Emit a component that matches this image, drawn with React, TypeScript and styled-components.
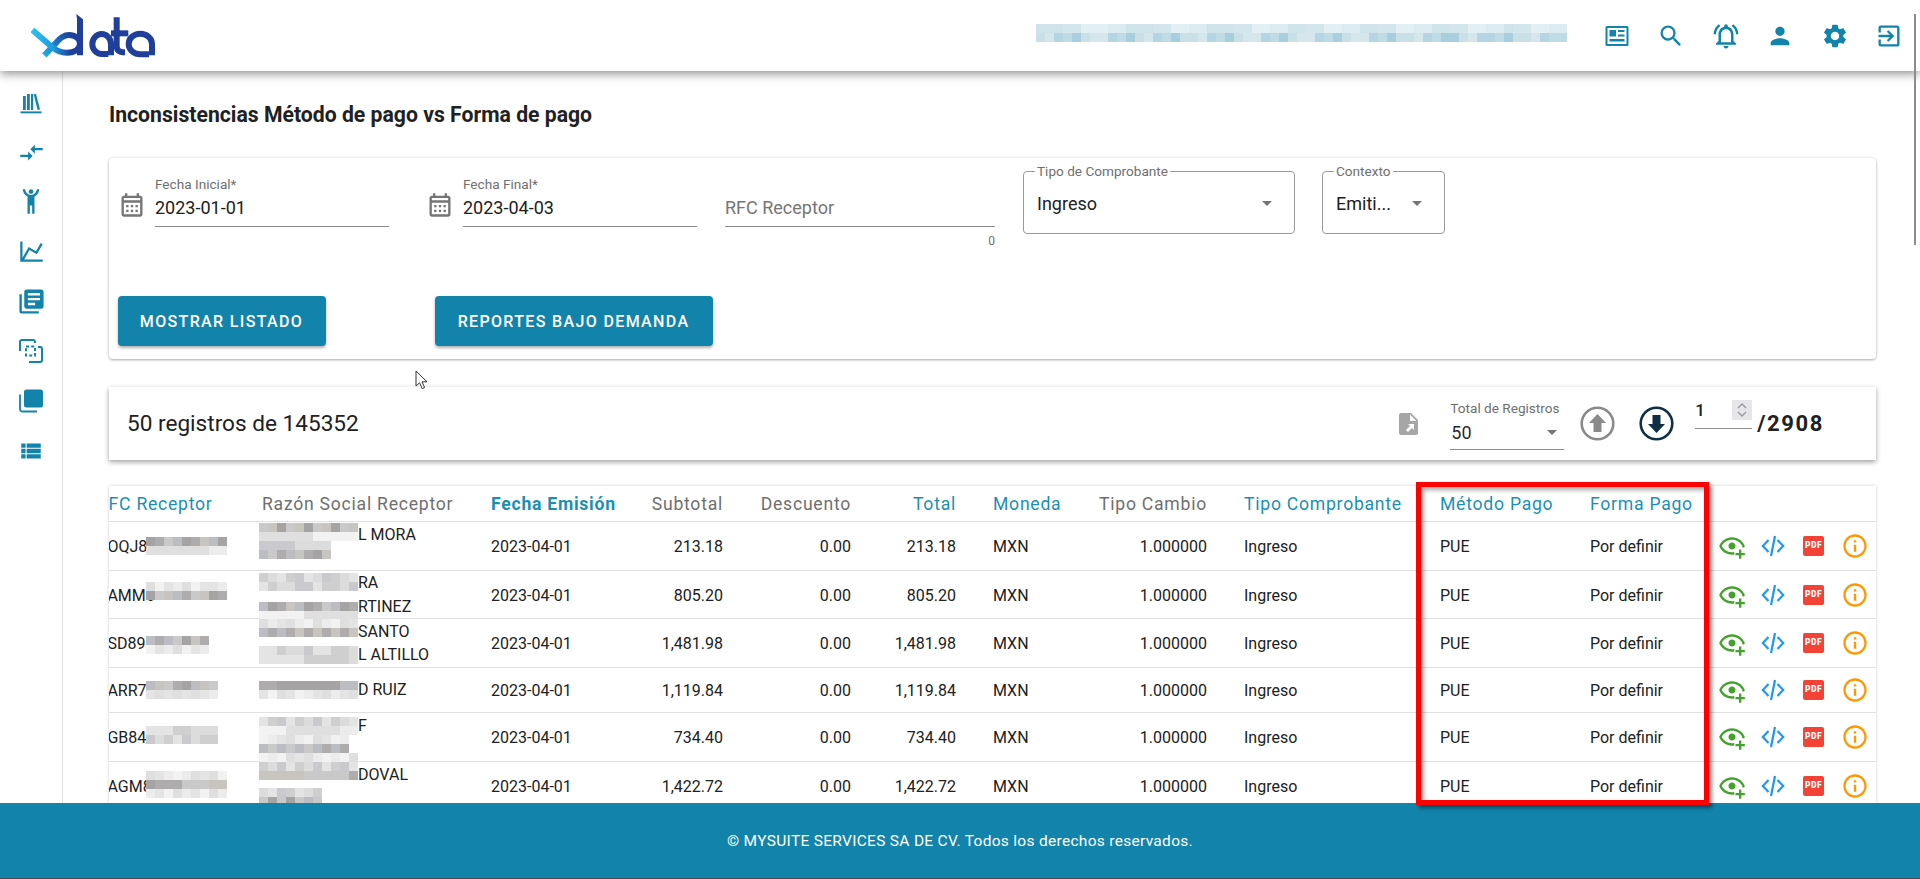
import React from "react";
import styled, { createGlobalStyle } from "styled-components";
import {
  MdCompareArrows,
  MdExitToApp,
  MdInfoOutline,
  MdLibraryBooks,
  MdOutlineCalendarMonth,
  MdOutlineNotificationsActive,
  MdPerson,
  MdSearch,
  MdSettings,
  MdViewList,
} from "react-icons/md";

const BRAND = "#1283aa";
const LINK = "#1a8fb5";
const MUTED = "#6f6f6f";

const GlobalStyle = createGlobalStyle`
  html, body {
    margin: 0;
    padding: 0;
    background: #fff;
  }
  body {
    font-family: Roboto, "Liberation Sans", sans-serif;
    color: rgba(0, 0, 0, 0.87);
  }
  * {
    box-sizing: border-box;
  }
`;

const Page = styled.div`
  position: relative;
  display: flex;
  flex-direction: column;
  height: 100vh;
  overflow: hidden;
`;

const Header = styled.header`
  position: relative;
  z-index: 2;
  flex: 0 0 71px;
  display: flex;
  align-items: center;
  padding: 0 17px 0 31px;
  background: #fff;
  box-shadow: 0 3px 9px rgba(0, 0, 0, 0.42);
`;

const HeaderIcons = styled.div`
  display: flex;
  align-items: center;
  gap: 26.4px;
  margin-left: 36px;
  color: ${BRAND};
`;

const HeaderBlur = styled.div`
  display: flex;
  margin-left: auto;
  margin-top: -6px;
`;

const BellIcon = styled(MdOutlineNotificationsActive)`
  margin: 0 -1px;
`;

const Body = styled.div`
  flex: 1;
  min-height: 0;
  display: flex;
`;

const Sidebar = styled.nav`
  flex: 0 0 63px;
  display: flex;
  flex-direction: column;
  align-items: center;
  padding: 7px 0 0 0;
  border-right: 1px solid #e0e0e0;
  color: ${BRAND};
`;

const SideSlot = styled.div`
  flex: 0 0 49.7px;
  display: flex;
  align-items: center;
  justify-content: center;
  width: 100%;
`;

const Main = styled.main`
  flex: 1;
  min-width: 0;
  padding: 31px 44px 0 46px;
  overflow: hidden;
`;

const Title = styled.h1`
  margin: 0 0 30px;
  font-size: 21.2px;
  line-height: 26px;
  font-weight: 700;
  color: #212121;
`;

const FilterCard = styled.section`
  height: 201px;
  padding: 13px 0 13px 8.5px;
  border-radius: 4px;
  background: #fff;
  box-shadow: 0 1px 3px rgba(0, 0, 0, 0.32), 0 0 2px rgba(0, 0, 0, 0.08);
`;

const FieldRow = styled.div`
  display: flex;
  align-items: flex-start;
  height: 77px;
`;

const DateField = styled.div<{ $gap: number }>`
  display: flex;
  align-items: flex-start;
  margin-left: ${(p) => p.$gap}px;
  color: #757575;

  & > svg {
    margin-top: 20px;
    margin-right: 9.5px;
  }
`;

const TextField = styled.div<{ $width: number; $gap?: number }>`
  width: ${(p) => p.$width}px;
  margin-left: ${(p) => p.$gap ?? 0}px;
  padding-top: 6px;
`;

const FieldLabel = styled.div`
  height: 14px;
  margin-bottom: 4px;
  font-size: 13.6px;
  line-height: 14px;
  color: ${MUTED};
`;

const FieldValue = styled.div<{ $placeholder?: boolean }>`
  height: 32px;
  padding-bottom: 7px;
  font-size: 18px;
  line-height: 25px;
  color: ${(p) => (p.$placeholder ? "#767676" : "#212121")};
  border-bottom: 1px solid #8c8c8c;
`;

const FieldCount = styled.div`
  margin-top: 7px;
  font-size: 12px;
  line-height: 14px;
  text-align: right;
  color: ${MUTED};
`;

const OutlinedSelect = styled.div<{ $width: number; $gap: number }>`
  position: relative;
  display: flex;
  align-items: center;
  justify-content: space-between;
  flex: 0 0 ${(p) => p.$width}px;
  height: 63px;
  margin-left: ${(p) => p.$gap}px;
  padding: 1px 22px 0 13px;
  border: 1px solid #9a9a9a;
  border-radius: 4px;
  font-size: 18px;
  color: #212121;
`;

const SelectLegend = styled.span`
  position: absolute;
  top: -8px;
  left: 11px;
  padding: 0 2px;
  background: #fff;
  font-size: 13.6px;
  line-height: 14px;
  color: ${MUTED};
`;

const Caret = styled.span`
  width: 0;
  height: 0;
  border-left: 5.5px solid transparent;
  border-right: 5.5px solid transparent;
  border-top: 5.5px solid #757575;
`;

const ButtonRow = styled.div`
  display: flex;
  gap: 109px;
  margin-top: 48px;
`;

const ActionButton = styled.button<{ $width: number }>`
  width: ${(p) => p.$width}px;
  height: 50px;
  border: 0;
  border-radius: 4px;
  background: ${BRAND};
  color: #fff;
  font-family: inherit;
  font-size: 16px;
  font-weight: 500;
  letter-spacing: 1.35px;
  text-transform: uppercase;
  box-shadow: 0 2px 3px rgba(0, 0, 0, 0.3);
`;

const Toolbar = styled.section`
  display: flex;
  align-items: center;
  height: 73px;
  margin-top: 28px;
  padding: 0 0 0 18px;
  background: #fff;
  box-shadow: 0 2px 5px rgba(0, 0, 0, 0.38);
`;

const RecordCount = styled.div`
  margin-right: auto;
  font-size: 22.6px;
  line-height: 28px;
  color: #212121;
`;

const ExportIcon = styled.svg`
  flex: none;
  margin-right: 32px;
`;

const PageSizeSelect = styled.div`
  align-self: flex-start;
  width: 114px;
  margin-top: 14px;
  margin-right: 16px;
`;

const PageSizeLabel = styled.div`
  font-size: 13.6px;
  line-height: 14px;
  color: ${MUTED};
`;

const PageSizeValue = styled.div`
  display: flex;
  align-items: center;
  justify-content: space-between;
  height: 32px;
  padding: 0 7px 3px 1px;
  border-bottom: 1px solid #8c8c8c;
  font-size: 18px;
  margin-top: 3px;
`;

const RoundIcon = styled.svg<{ $after: number }>`
  flex: none;
  margin-right: ${(p) => p.$after}px;
`;

const PageInput = styled.div`
  position: relative;
  align-self: flex-start;
  width: 57px;
  height: 29px;
  margin-top: 13px;
  border-bottom: 1px solid #8c8c8c;
  font-size: 17px;
  line-height: 20px;
  font-weight: 500;
  color: #212121;
`;

const Spinner = styled.span`
  position: absolute;
  top: 0;
  right: 0;
  display: flex;
  align-items: center;
  justify-content: center;
  width: 20px;
  height: 20px;
  background: #e6e6ea;
`;

const PageTotal = styled.div`
  margin-left: 5px;
  margin-right: 52px;
  font-size: 22px;
  font-weight: 700;
  letter-spacing: 1.6px;
  color: #212121;
`;

const TableCard = styled.section`
  margin-top: 26px;
  background: #fff;
  box-shadow: 0 0 3px rgba(0, 0, 0, 0.2);
  overflow: hidden;
`;

const DataTable = styled.table`
  width: 1795px;
  margin-left: -28px;
  table-layout: fixed;
  border-collapse: separate;
  border-spacing: 0;
`;

const HeadCell = styled.th<{ $right?: boolean; $tone?: "link" | "muted" | "active" }>`
  height: 36px;
  padding: ${(p) => (p.$right ? "1px 21px 0 16px" : "1px 16px 0")};
  text-align: ${(p) => (p.$right ? "right" : "left")};
  border-bottom: 1px solid #e0e0e0;
  font-size: 17.6px;
  letter-spacing: 0.75px;
  white-space: nowrap;
  font-weight: ${(p) => (p.$tone === "active" ? 700 : 400)};
  color: ${(p) => (p.$tone === "muted" ? MUTED : LINK)};
`;

const Cell = styled.td<{ $right?: boolean; $height?: number; $flush?: boolean }>`
  position: relative;
  height: ${(p) => p.$height ?? 49}px;
  padding: ${(p) => (p.$flush ? "0" : "2px")} ${(p) => (p.$right ? "21px" : "16px")} 0 16px;
  text-align: ${(p) => (p.$right ? "right" : "left")};
  border-bottom: 1px solid #e0e0e0;
  font-size: 16px;
  line-height: 23.5px;
  white-space: nowrap;
  color: #212121;
`;

const NameText = styled.div`
  padding-left: 96px;
`;

const ActionIcons = styled.div`
  display: flex;
  align-items: center;
  margin-left: -14px;
  margin-top: -2px;
`;

const ActionSlot = styled.span`
  flex: 0 0 41px;
  display: flex;
  align-items: center;
  justify-content: center;
`;

const PdfBadge = styled.span`
  display: flex;
  align-items: center;
  justify-content: center;
  width: 21px;
  height: 20px;
  border-radius: 2px;
  background: #f44336;
  color: #fff;
  font-size: 8.5px;
  font-weight: 900;
  letter-spacing: 0.4px;
`;

const BlurLayer = styled.svg<{ $left: number; $top: number }>`
  position: absolute;
  left: ${(p) => p.$left}px;
  top: ${(p) => p.$top}px;
`;

const Footer = styled.footer`
  position: relative;
  z-index: 1;
  flex: 0 0 76px;
  display: flex;
  align-items: center;
  justify-content: center;
  background: ${BRAND};
  border-bottom: 1px solid #4a4a4a;
  color: #fff;
  font-size: 15.5px;
  letter-spacing: 0.3px;
`;

const Highlight = styled.div`
  position: absolute;
  z-index: 3;
  left: 1416px;
  top: 482px;
  width: 293px;
  height: 323px;
  border: 5px solid #ff0000;
  box-shadow: 3px 3px 4px rgba(0, 0, 0, 0.45), inset 3px 3px 4px rgba(0, 0, 0, 0.35);
  pointer-events: none;
`;

const ScrollThumb = styled.div`
  position: absolute;
  z-index: 4;
  left: 1914px;
  top: 14px;
  width: 2px;
  height: 231px;
  background: #8c8c8c;
`;

const Pointer = styled.svg`
  position: absolute;
  z-index: 4;
  left: 415px;
  top: 370px;
`;

// greys and blues used for the pixelated (redacted) bits
const GREYS = [
  ["#fbfbfb", "#f7f7f7", "#fafafa"],
  ["#ececec", "#e4e4e4", "#f2f2f2", "#dfdfdf"],
  ["#dcdcdc", "#cfcfcf", "#e4e4e4", "#cacace"],
  ["#c9c9c9", "#aeacac", "#a5a3a3", "#bbbdc2", "#c8c4bf"],
];
const BLUES = [
  ["#f0f7fa", "#e8f2f6"],
  ["#e2eff4", "#d3e6ed", "#cfe3eb", "#dcebf1"],
  ["#bfdbe6", "#a9cfdf", "#c9e0e9", "#d5e6ed", "#b5d5e2"],
];

type Band = { y: number; cols: number; tone: number };

const mosaicCells = (bands: Band[], seed: number, palette: string[][]) => {
  const rects: React.ReactNode[] = [];
  bands.forEach((b, i) => {
    for (let c = 0; c < b.cols; c++) {
      const n = Math.abs(Math.sin(seed * 12.9 + i * 78.2 + c * 37.7) * 4375.5);
      const shades = palette[b.tone];
      rects.push(
        <rect key={`${i}-${c}`} x={c * 9} y={b.y} width={9} height={9} fill={shades[Math.floor(n) % shades.length]} />
      );
    }
  });
  return {
    rects,
    width: Math.max(...bands.map((b) => b.cols)) * 9,
    height: Math.max(...bands.map((b) => b.y + 9)),
  };
};

const CellBlur = ({ left, top, bands, seed }: { left: number; top: number; bands: Band[]; seed: number }) => {
  const { rects, width, height } = mosaicCells(bands, seed, GREYS);
  return (
    <BlurLayer $left={left} $top={top} width={width} height={height} viewBox={`0 0 ${width} ${height}`} shapeRendering="crispEdges">
      {rects}
    </BlurLayer>
  );
};

const AccountBlur = () => {
  const { rects, width, height } = mosaicCells(
    [
      { y: 0, cols: 59, tone: 1 },
      { y: 9, cols: 59, tone: 2 },
    ],
    5,
    BLUES
  );
  return (
    <svg width={width} height={height} viewBox={`0 0 ${width} ${height}`} shapeRendering="crispEdges">
      {rects}
    </svg>
  );
};

const Logo = () => (
  <svg width="124" height="44" viewBox="0 0 372 132">
    <defs>
      <linearGradient id="logoSweep" gradientUnits="userSpaceOnUse" x1="0" y1="0" x2="150" y2="0">
        <stop offset="0" stopColor="#2cc4f0" />
        <stop offset="0.45" stopColor="#1d9be0" />
        <stop offset="0.8" stopColor="#1f3f9a" />
      </linearGradient>
      <linearGradient id="logoArm" gradientUnits="userSpaceOnUse" x1="30" y1="122" x2="120" y2="60">
        <stop offset="0" stopColor="#22b4ea" />
        <stop offset="0.6" stopColor="#1f6cc0" />
        <stop offset="1" stopColor="#1f3f9a" />
      </linearGradient>
    </defs>
    <g fill="none" strokeWidth="18">
      <path d="M40 124L74 88C86 72 98 63 114 63C132 63 147 74 147 90" stroke="url(#logoArm)" />
      <path d="M4 48L62 98C78 112 92 116 108 116C130 116 147 106 147 88" stroke="url(#logoSweep)" />
    </g>
    <path d="M136 0L156 16V124H138V16Z" fill="#1f3f9a" />
    <g fill="none" stroke="#1f3f9a" strokeWidth="18">
      <path d="M240 124V90A28 30 0 1 0 212 120H232" />
      <path d="M257 10V96C257 110 266 115 282 115" />
      <path d="M240 58H292" />
      <path d="M363 124V90A35 31 0 1 0 329 121H354" />
    </g>
  </svg>
);

const BookshelfIcon = () => (
  <svg width="24" height="24" viewBox="0 0 24 24" fill="currentColor">
    <rect x="1.5" y="20.4" width="21" height="1.9" />
    <rect x="4" y="5" width="2.8" height="14" />
    <rect x="8" y="3" width="2.8" height="16" />
    <rect x="12" y="3" width="2.2" height="16" />
    <path d="M14.8 3.4L17 2.8L21 18.4L18.6 19Z" />
  </svg>
);

const HumanIcon = () => (
  <svg width="28" height="28" viewBox="0 0 24 24" fill="currentColor">
    <path d="M5,1C5,3.7 6.56,6.16 9,7.32V22H11V15H13V22H15V7.31C17.44,6.16 19,3.7 19,1H17A5,5 0 0,1 12,6A5,5 0 0,1 7,1M12,1C10.89,1 10,1.89 10,3C10,4.11 10.89,5 12,5C13.11,5 14,4.11 14,3C14,1.89 13.11,1 12,1Z" />
  </svg>
);

const ChartIcon = () => (
  <svg width="27" height="27" viewBox="0 0 24 24" fill="currentColor">
    <path d="M16,11.78L20.24,4.45L21.97,5.45L16.74,14.5L10.23,10.75L5.46,19H22V21H2V3H4V17.54L9.5,8L16,11.78Z" />
  </svg>
);

const FlipIcon = () => (
  <svg width="26" height="26" viewBox="0 0 26 26" fill="none" stroke="currentColor" strokeWidth="2">
    <path d="M2 13V4A2 2 0 0 1 4 2H15A2 2 0 0 1 17 4V5" />
    <path d="M11 24H22A2 2 0 0 0 24 22V11A2 2 0 0 0 22 9H20" />
    <rect x="8" y="8.5" width="9" height="9" strokeDasharray="3 2.2" />
  </svg>
);

const CopyFilledIcon = () => (
  <svg width="26" height="26" viewBox="0 0 26 26" fill="currentColor">
    <rect x="6" y="1.5" width="19" height="18" rx="2.5" />
    <path d="M2 6.5V21A2.5 2.5 0 0 0 4.5 23.5H19" fill="none" stroke="currentColor" strokeWidth="1.8" />
  </svg>
);

const NewsIcon = () => (
  <svg width="28" height="28" viewBox="0 0 28 28" fill="currentColor">
    <path fillRule="evenodd" d="M4 4H24A1.5 1.5 0 0 1 25.5 5.5V22.5A1.5 1.5 0 0 1 24 24H4A1.5 1.5 0 0 1 2.5 22.5V5.5A1.5 1.5 0 0 1 4 4ZM4.5 6V22H23.5V6Z" />
    <rect x="6.5" y="8" width="6.5" height="6.5" />
    <rect x="15" y="8" width="6.5" height="2" />
    <rect x="15" y="12.5" width="6.5" height="2" />
    <rect x="6.5" y="17" width="15" height="2.5" />
  </svg>
);

const EyePlusIcon = () => (
  <svg width="28" height="28" viewBox="0 0 24 24" fill="#43a22c">
    <path d="M12 4.5C7 4.5 2.7 7.6 1 12C2.7 16.4 7 19.5 12 19.5C12.7 19.5 13.4 19.4 14.1 19.3C14 18.9 14 18.5 14 18C14 17.7 14 17.4 14.1 17.1C13.4 17.2 12.7 17.3 12 17.3C8.2 17.3 4.8 15.2 3.2 12C4.8 8.8 8.2 6.7 12 6.7S19.2 8.8 20.8 12C20.7 12.2 20.5 12.4 20.4 12.7C21.1 12.9 21.7 13.1 22.3 13.5C22.6 13 22.8 12.5 23 12C21.3 7.6 17 4.5 12 4.5M12 9C10.3 9 9 10.3 9 12S10.3 15 12 15 15 13.7 15 12 13.7 9 12 9M18 15V18H15V20H18V23H20V20H23V18H20V15H18Z" />
  </svg>
);

const CodeIcon = () => (
  <svg width="24" height="22" viewBox="0 0 24 22" fill="none" stroke="#2196f3" strokeWidth="2.2">
    <path d="M7.5 5L1.8 11L7.5 17" />
    <path d="M16.5 5L22.2 11L16.5 17" />
    <path d="M14 1L10 21" />
  </svg>
);

const UpIcon = () => (
  <RoundIcon $after={24} width="35" height="35" viewBox="0 0 35 35">
    <circle cx="17.5" cy="17.5" r="15.8" fill="none" stroke="#8a8a8a" strokeWidth="2.6" />
    <path d="M17.5 8L26 17H21.5V26H13.5V17H9Z" fill="#8a8a8a" />
  </RoundIcon>
);

const DownIcon = () => (
  <RoundIcon $after={21} width="35" height="35" viewBox="0 0 35 35">
    <circle cx="17.5" cy="17.5" r="15.8" fill="none" stroke="#0f2d45" strokeWidth="2.6" />
    <path d="M17.5 27L9 18H13.5V9H21.5V18H26Z" fill="#0f2d45" />
  </RoundIcon>
);

const rows = [
  { rfc: "COQJ8", name: ["L MORA", "\u00a0"], height: 49, rfcBlur: { top: 15, bands: [{ y: 0, cols: 9, tone: 3 }, { y: 9, cols: 9, tone: 1 }] },
    nameBlur: { top: 1, bands: [{ y: 0, cols: 11, tone: 3 }, { y: 9, cols: 11, tone: 1 }, { y: 18, cols: 8, tone: 2 }, { y: 27, cols: 8, tone: 3 }] } },
  { rfc: "CAMM6", name: ["RA", "RTINEZ"], height: 48, rfcBlur: { top: 11, bands: [{ y: 0, cols: 9, tone: 1 }, { y: 9, cols: 9, tone: 3 }] },
    nameBlur: { top: 2, bands: [{ y: 0, cols: 11, tone: 2 }, { y: 9, cols: 11, tone: 2 }, { y: 29, cols: 11, tone: 3 }, { y: 38, cols: 11, tone: 1 }] } },
  { rfc: "CSD890", name: ["SANTO", "L ALTILLO"], height: 49, rfcBlur: { top: 17, bands: [{ y: 0, cols: 7, tone: 3 }, { y: 9, cols: 7, tone: 1 }] },
    nameBlur: { top: 0, bands: [{ y: 0, cols: 11, tone: 1 }, { y: 9, cols: 11, tone: 3 }, { y: 27, cols: 11, tone: 2 }, { y: 36, cols: 11, tone: 2 }] } },
  { rfc: "CARR71", name: ["D RUIZ"], height: 45, rfcBlur: { top: 13, bands: [{ y: 0, cols: 8, tone: 3 }, { y: 9, cols: 8, tone: 1 }] },
    nameBlur: { top: 13, bands: [{ y: 0, cols: 11, tone: 3 }, { y: 9, cols: 11, tone: 1 }] } },
  { rfc: "CGB841", name: ["F", "\u00a0"], height: 49, rfcBlur: { top: 13, bands: [{ y: 0, cols: 8, tone: 2 }, { y: 9, cols: 8, tone: 2 }] },
    nameBlur: { top: 4, bands: [{ y: 0, cols: 11, tone: 2 }, { y: 9, cols: 11, tone: 1 }, { y: 18, cols: 10, tone: 1 }, { y: 27, cols: 10, tone: 3 }] } },
  { rfc: "CAGM8", name: ["DOVAL", "\u00a0"], height: 49, rfcBlur: { top: 9, bands: [{ y: 0, cols: 9, tone: 1 }, { y: 9, cols: 9, tone: 3 }, { y: 18, cols: 9, tone: 1 }] },
    nameBlur: { top: -9, bands: [{ y: 0, cols: 11, tone: 1 }, { y: 9, cols: 11, tone: 2 }, { y: 18, cols: 11, tone: 3 }, { y: 35, cols: 7, tone: 2 }, { y: 44, cols: 7, tone: 3 }] } },
];

const amounts = ["213.18", "805.20", "1,481.98", "1,119.84", "734.40", "1,422.72"];

const columnWidths = [165, 229, 155, 114, 128, 105, 98, 153, 196, 150, 135, 167];

const App = () => {
  return (
    <Page>
      <GlobalStyle />
      <Header>
        <Logo />
        <HeaderBlur>
          <AccountBlur />
        </HeaderBlur>
        <HeaderIcons>
          <NewsIcon />
          <MdSearch size={28} />
          <BellIcon size={30} />
          <MdPerson size={28} />
          <MdSettings size={28} />
          <MdExitToApp size={28} />
        </HeaderIcons>
      </Header>

      <Body>
        <Sidebar>
          <SideSlot><BookshelfIcon /></SideSlot>
          <SideSlot><MdCompareArrows size={27} /></SideSlot>
          <SideSlot><HumanIcon /></SideSlot>
          <SideSlot><ChartIcon /></SideSlot>
          <SideSlot><MdLibraryBooks size={29} /></SideSlot>
          <SideSlot><FlipIcon /></SideSlot>
          <SideSlot><CopyFilledIcon /></SideSlot>
          <SideSlot><MdViewList size={26} /></SideSlot>
        </Sidebar>

        <Main>
          <Title>Inconsistencias Método de pago vs Forma de pago</Title>

          <FilterCard>
            <FieldRow>
              <DateField $gap={0}>
                <MdOutlineCalendarMonth size={28} />
                <TextField $width={234}>
                  <FieldLabel>Fecha Inicial*</FieldLabel>
                  <FieldValue>2023-01-01</FieldValue>
                </TextField>
              </DateField>
              <DateField $gap={36.5}>
                <MdOutlineCalendarMonth size={28} />
                <TextField $width={234}>
                  <FieldLabel>Fecha Final*</FieldLabel>
                  <FieldValue>2023-04-03</FieldValue>
                </TextField>
              </DateField>
              <TextField $width={270} $gap={28}>
                <FieldLabel />
                <FieldValue $placeholder>RFC Receptor</FieldValue>
                <FieldCount>0</FieldCount>
              </TextField>
              <OutlinedSelect $width={272} $gap={28}>
                <SelectLegend>Tipo de Comprobante</SelectLegend>
                Ingreso
                <Caret />
              </OutlinedSelect>
              <OutlinedSelect $width={123} $gap={27}>
                <SelectLegend>Contexto</SelectLegend>
                Emiti...
                <Caret />
              </OutlinedSelect>
            </FieldRow>
            <ButtonRow>
              <ActionButton $width={208}>Mostrar Listado</ActionButton>
              <ActionButton $width={278}>Reportes bajo demanda</ActionButton>
            </ButtonRow>
          </FilterCard>

          <Toolbar>
            <RecordCount>50 registros de 145352</RecordCount>
            <ExportIcon width="19" height="22" viewBox="0 0 19 22">
              <path d="M2 0H12L19 7V20A2 2 0 0 1 17 22H2A2 2 0 0 1 0 20V2A2 2 0 0 1 2 0Z" fill="#a6a6a6" />
              <path d="M11 1.5L17.5 8H11Z" fill="#fff" />
              <path d="M9 11H15V17L13 15L9 19L7 17L11 13Z" fill="#fff" />
            </ExportIcon>
            <PageSizeSelect>
              <PageSizeLabel>Total de Registros</PageSizeLabel>
              <PageSizeValue>
                50
                <Caret />
              </PageSizeValue>
            </PageSizeSelect>
            <UpIcon />
            <DownIcon />
            <PageInput>
              1
              <Spinner>
                <svg width="12" height="16" viewBox="0 0 12 16" fill="none" stroke="#9a9a9a" strokeWidth="1.4">
                  <path d="M2 6L6 2L10 6" />
                  <path d="M2 10L6 14L10 10" />
                </svg>
              </Spinner>
            </PageInput>
            <PageTotal>/2908</PageTotal>
          </Toolbar>

          <TableCard>
            <DataTable>
              <colgroup>
                {columnWidths.map((w, i) => (
                  <col key={i} width={w} />
                ))}
              </colgroup>
              <thead>
                <tr>
                  <HeadCell>RFC Receptor</HeadCell>
                  <HeadCell $tone="muted">Razón Social Receptor</HeadCell>
                  <HeadCell $tone="active">Fecha Emisión</HeadCell>
                  <HeadCell $right $tone="muted">Subtotal</HeadCell>
                  <HeadCell $right $tone="muted">Descuento</HeadCell>
                  <HeadCell $right>Total</HeadCell>
                  <HeadCell>Moneda</HeadCell>
                  <HeadCell $right $tone="muted">Tipo Cambio</HeadCell>
                  <HeadCell>Tipo Comprobante</HeadCell>
                  <HeadCell>Método Pago</HeadCell>
                  <HeadCell>Forma Pago</HeadCell>
                  <HeadCell />
                </tr>
              </thead>
              <tbody>
                {rows.map((row, i) => (
                  <tr key={i}>
                    <Cell $height={row.height}>
                      {row.rfc}
                      <CellBlur left={65} top={row.rfcBlur.top} bands={row.rfcBlur.bands} seed={i + 1} />
                    </Cell>
                    <Cell $height={row.height} $flush>
                      <NameText>
                        {row.name.map((line, j) => (
                          <div key={j}>{line}</div>
                        ))}
                      </NameText>
                      <CellBlur left={13} top={row.nameBlur.top} bands={row.nameBlur.bands} seed={i + 11} />
                    </Cell>
                    <Cell $height={row.height}>2023-04-01</Cell>
                    <Cell $height={row.height} $right>{amounts[i]}</Cell>
                    <Cell $height={row.height} $right>0.00</Cell>
                    <Cell $height={row.height} $right>{amounts[i]}</Cell>
                    <Cell $height={row.height}>MXN</Cell>
                    <Cell $height={row.height} $right>1.000000</Cell>
                    <Cell $height={row.height}>Ingreso</Cell>
                    <Cell $height={row.height}>PUE</Cell>
                    <Cell $height={row.height}>Por definir</Cell>
                    <Cell $height={row.height}>
                      <ActionIcons>
                        <ActionSlot><EyePlusIcon /></ActionSlot>
                        <ActionSlot><CodeIcon /></ActionSlot>
                        <ActionSlot><PdfBadge>PDF</PdfBadge></ActionSlot>
                        <ActionSlot><MdInfoOutline size={28} color="#ff9800" /></ActionSlot>
                      </ActionIcons>
                    </Cell>
                  </tr>
                ))}
              </tbody>
            </DataTable>
          </TableCard>
        </Main>
      </Body>

      <Footer>© MYSUITE SERVICES SA DE CV. Todos los derechos reservados.</Footer>

      <Highlight />
      <ScrollThumb />
      <Pointer width="14" height="20" viewBox="0 0 14 20">
        <path d="M1 1V16L4.6 12.8L7.2 18.6L9.6 17.5L7 11.8H12Z" fill="#fff" stroke="#333" strokeWidth="1" />
      </Pointer>
    </Page>
  );
};

export default App;
